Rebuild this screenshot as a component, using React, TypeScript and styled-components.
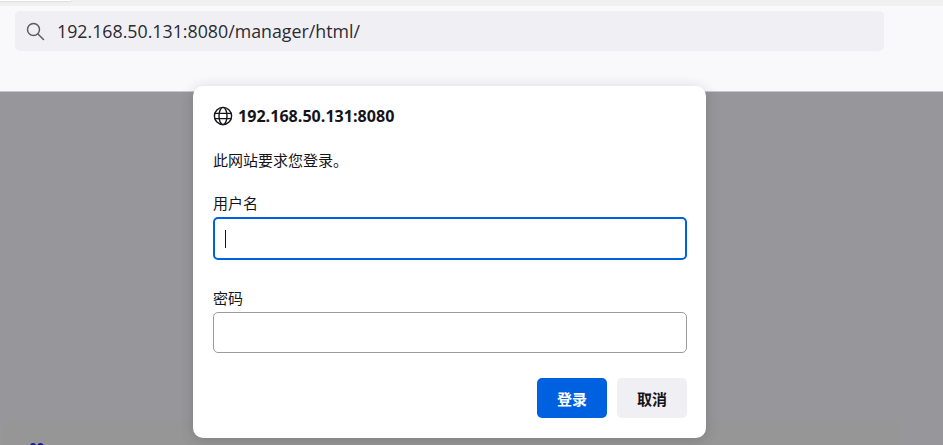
import React from "react";
import styled, { createGlobalStyle } from "styled-components";

const Global = createGlobalStyle`
  html, body { margin: 0; padding: 0; height: 100%; overflow: hidden; }
  #root { height: 100%; }
  * { box-sizing: border-box; }
  body { font-family: "Open Sans", "Noto Sans CJK SC", sans-serif; color: #15141a; }
`;

const Page = styled.div`
  position: relative;
  display: flex;
  flex-direction: column;
  width: 943px;
  height: 445px;
  overflow: hidden;
  background: #97969a;
`;

const TabStrip = styled.div`
  height: 6px;
  flex: none;
  background: #f0f0f0;
`;

const ActiveTab = styled.div`
  width: 71px;
  height: 1px;
  background: #ffffff;
  box-shadow: 0 0 2px rgba(0, 0, 0, 0.3);
`;

const Toolbar = styled.div`
  flex: none;
  height: 86px;
  padding: 5px 59px 0 15px;
  background: #f9f9fb;
  border-bottom: 1px solid #c6c6c8;
`;

const UrlBar = styled.div`
  display: flex;
  align-items: center;
  height: 40px;
  padding-left: 10px;
  gap: 12px;
  background: #f0f0f4;
  border-radius: 5px;
  font-family: "Open Sans", sans-serif;
  font-size: 17.8px;
  color: #2b2a33;
`;

const Content = styled.div`
  flex: 1;
  padding: 330px 43px 0 2px;
  overflow: hidden;
`;

const Card = styled.div`
  height: 60px;
  padding: 21px 0 0 28px;
  background: #969696;
  border-radius: 8px 8px 0 0;
`;

const Dots = styled.svg`
  display: block;
`;

const Dialog = styled.div`
  position: absolute;
  top: 86px;
  left: 193px;
  width: 513px;
  height: 352px;
  padding: 20px 19px 0 20px;
  display: flex;
  flex-direction: column;
  background: #ffffff;
  border-radius: 10px;
  box-shadow: 0 2px 14px rgba(0, 0, 0, 0.16);
`;

const Host = styled.div`
  display: flex;
  align-items: center;
  gap: 5px;
  height: 20px;
  font-family: "Open Sans", sans-serif;
  font-size: 16.1px;
  font-weight: 700;
  color: #15141a;
`;

const Message = styled.div`
  margin-top: 24px;
  height: 20px;
  line-height: 20px;
  font-size: 15px;
`;

const FieldLabel = styled.div<{ $gap: number }>`
  margin-top: ${(p) => p.$gap}px;
  height: 20px;
  line-height: 20px;
  font-size: 15px;
`;

const Field = styled.div<{ $focused?: boolean }>`
  margin-top: 4px;
  display: flex;
  align-items: center;
  height: ${(p) => (p.$focused ? 43 : 41)}px;
  padding-left: 10px;
  background: #ffffff;
  border: ${(p) => (p.$focused ? "2px solid #0061e0" : "1px solid #9c9c9f")};
  border-radius: 5px;
`;

const Caret = styled.span`
  width: 1px;
  height: 18px;
  background: #15141a;
`;

const Actions = styled.div`
  margin-top: 25px;
  display: flex;
  justify-content: flex-end;
  gap: 10px;
`;

const Button = styled.div<{ $primary?: boolean }>`
  display: flex;
  align-items: center;
  justify-content: center;
  width: 70px;
  height: 40px;
  border-radius: 5px;
  font-size: 15px;
  font-weight: 700;
  background: ${(p) => (p.$primary ? "#0061e0" : "#f0f0f4")};
  color: ${(p) => (p.$primary ? "#fbfbfe" : "#15141a")};
`;

export default function App() {
  return (
    <Page>
      <Global />
      <TabStrip>
        <ActiveTab />
      </TabStrip>
      <Toolbar>
        <UrlBar>
          <svg width="20" height="20" viewBox="0 0 20 20" fill="none" stroke="#5b5b66" strokeWidth="1.5" strokeLinecap="round">
            <circle cx="8.5" cy="8.5" r="6" />
            <path d="M13 13l5.5 5.5" />
          </svg>
          <span>192.168.50.131:8080/manager/html/</span>
        </UrlBar>
      </Toolbar>
      <Content>
        <Card>
          <Dots width="14" height="6" viewBox="0 0 14 6">
            <circle cx="3" cy="3" r="3" fill="#1c1c8c" />
            <circle cx="10.5" cy="3" r="3" fill="#1c1c8c" />
          </Dots>
        </Card>
      </Content>
      <Dialog>
        <Host>
          <svg width="20" height="20" viewBox="0 0 20 20" fill="none" stroke="#15141a" strokeWidth="1.4">
            <circle cx="10" cy="10" r="8.6" />
            <ellipse cx="10" cy="10" rx="4" ry="8.6" />
            <path d="M1.6 7.4h16.8M1.6 12.6h16.8" />
          </svg>
          <span>192.168.50.131:8080</span>
        </Host>
        <Message>此网站要求您登录。</Message>
        <FieldLabel $gap={23}>用户名</FieldLabel>
        <Field $focused>
          <Caret />
        </Field>
        <FieldLabel $gap={28}>密码</FieldLabel>
        <Field />
        <Actions>
          <Button $primary>登录</Button>
          <Button>取消</Button>
        </Actions>
      </Dialog>
    </Page>
  );
}
